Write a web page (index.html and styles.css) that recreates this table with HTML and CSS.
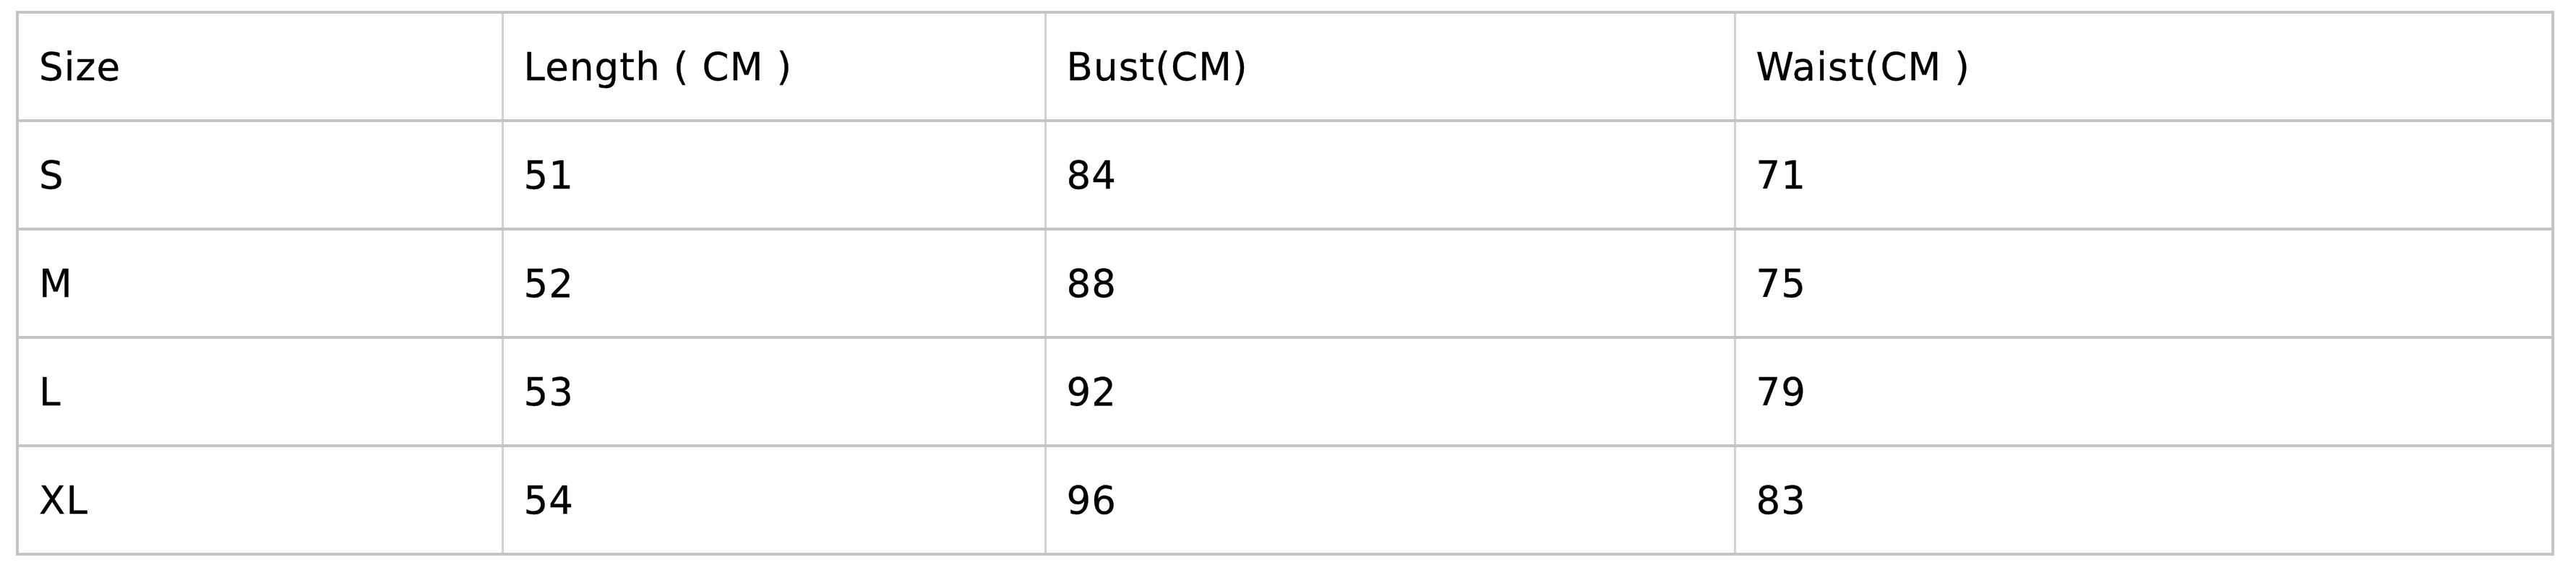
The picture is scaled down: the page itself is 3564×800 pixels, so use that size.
FILE: index.html
```html
<!DOCTYPE html>
<html>
<head>
<meta charset="utf-8">
<link rel="stylesheet" href="styles.css">
</head>
<body>
<div class="wrap">
<table class="size-table">
<colgroup>
<col class="c1"><col class="c2"><col class="c3"><col class="c4">
</colgroup>
<tr><td>Size</td><td>Length ( CM )</td><td>Bust(CM)</td><td>Waist(CM )</td></tr>
<tr><td>S</td><td>51</td><td>84</td><td>71</td></tr>
<tr><td>M</td><td>52</td><td>88</td><td>75</td></tr>
<tr><td>L</td><td>53</td><td>92</td><td>79</td></tr>
<tr><td>XL</td><td>54</td><td>96</td><td>83</td></tr>
</table>
</div>
</body>
</html>
```
FILE: styles.css
```css
html, body {
  margin: 0;
  padding: 0;
  background: #ffffff;
}
.wrap {
  padding: 15px 30px 0 22px;
}
.size-table {
  width: 3512px;
  table-layout: fixed;
  border-collapse: collapse;
  border: 4px solid #c4c4c4;
  font-family: "DejaVu Sans", Verdana, sans-serif;
  font-size: 53px;
  letter-spacing: 1.1px;
  color: #000;
  -webkit-text-stroke: 0.3px #000;
}
.c1 { width: 671px; }
.c2 { width: 751px; }
.c3 { width: 954px; }
.c4 { width: 1132px; }
.size-table td {
  height: 146px;
  padding: 0 0 0 28px;
  vertical-align: middle;
  border-top: 4px solid #c4c4c4;
  border-bottom: 4px solid #c4c4c4;
  border-left: 3px solid #d0d0d0;
  border-right: 3px solid #d0d0d0;
  white-space: nowrap;
}
```
